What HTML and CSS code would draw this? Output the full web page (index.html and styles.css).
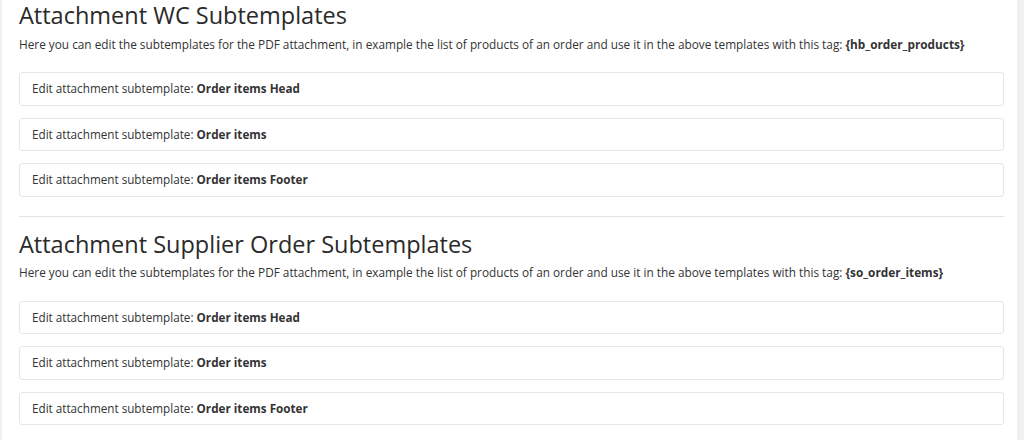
FILE: index.html
```html
<!DOCTYPE html>
<html lang="en">
<head>
<meta charset="utf-8">
<title>Subtemplates</title>
<link rel="stylesheet" href="styles.css">
</head>
<body>
<div class="panel">
  <section class="group">
    <h2 class="title">Attachment WC Subtemplates</h2>
    <p class="desc">Here you can edit the subtemplates for the PDF attachment, in example the list of products of an order and use it in the above templates with this tag: <strong>{hb_order_products}</strong></p>
    <div class="item">Edit attachment subtemplate: <strong>Order items Head</strong></div>
    <div class="item">Edit attachment subtemplate: <strong>Order items</strong></div>
    <div class="item">Edit attachment subtemplate: <strong>Order items Footer</strong></div>
  </section>
  <hr class="sep">
  <section class="group">
    <h2 class="title">Attachment Supplier Order Subtemplates</h2>
    <p class="desc">Here you can edit the subtemplates for the PDF attachment, in example the list of products of an order and use it in the above templates with this tag: <strong>{so_order_items}</strong></p>
    <div class="item">Edit attachment subtemplate: <strong>Order items Head</strong></div>
    <div class="item">Edit attachment subtemplate: <strong>Order items</strong></div>
    <div class="item">Edit attachment subtemplate: <strong>Order items Footer</strong></div>
  </section>
</div>
</body>
</html>
```

FILE: styles.css
```css
html, body {
  margin: 0;
  padding: 0;
}
body {
  background: #f1f1f1;
  font-family: "Open Sans", "Noto Sans", sans-serif;
  color: #333;
  height: 440px;
  overflow: hidden;
}
.panel {
  margin-left: 2px;
  width: 1015px;
  box-sizing: border-box;
  background: #fff;
  padding: 0 13px 0 17px;
  min-height: 440px;
}
.title {
  margin: 0;
  font-size: 23.5px;
  font-weight: 400;
  line-height: 30px;
  color: #2a2a2a;
}
.desc {
  margin: 4.5px 0 19.5px;
  font-size: 11.8px;
  line-height: 18px;
}
.desc strong, .item strong {
  font-weight: 700;
}
.item {
  border: 1px solid #e6e6e6;
  border-radius: 3px;
  padding: 0 12px;
  height: 33.5px;
  line-height: 31.5px;
  box-sizing: border-box;
  font-size: 11.7px;
  margin-bottom: 12px;
  white-space: nowrap;
}
.sep {
  border: 0;
  border-top: 1px solid #e2e2e2;
  margin: 19px 0 12px;
}
```
